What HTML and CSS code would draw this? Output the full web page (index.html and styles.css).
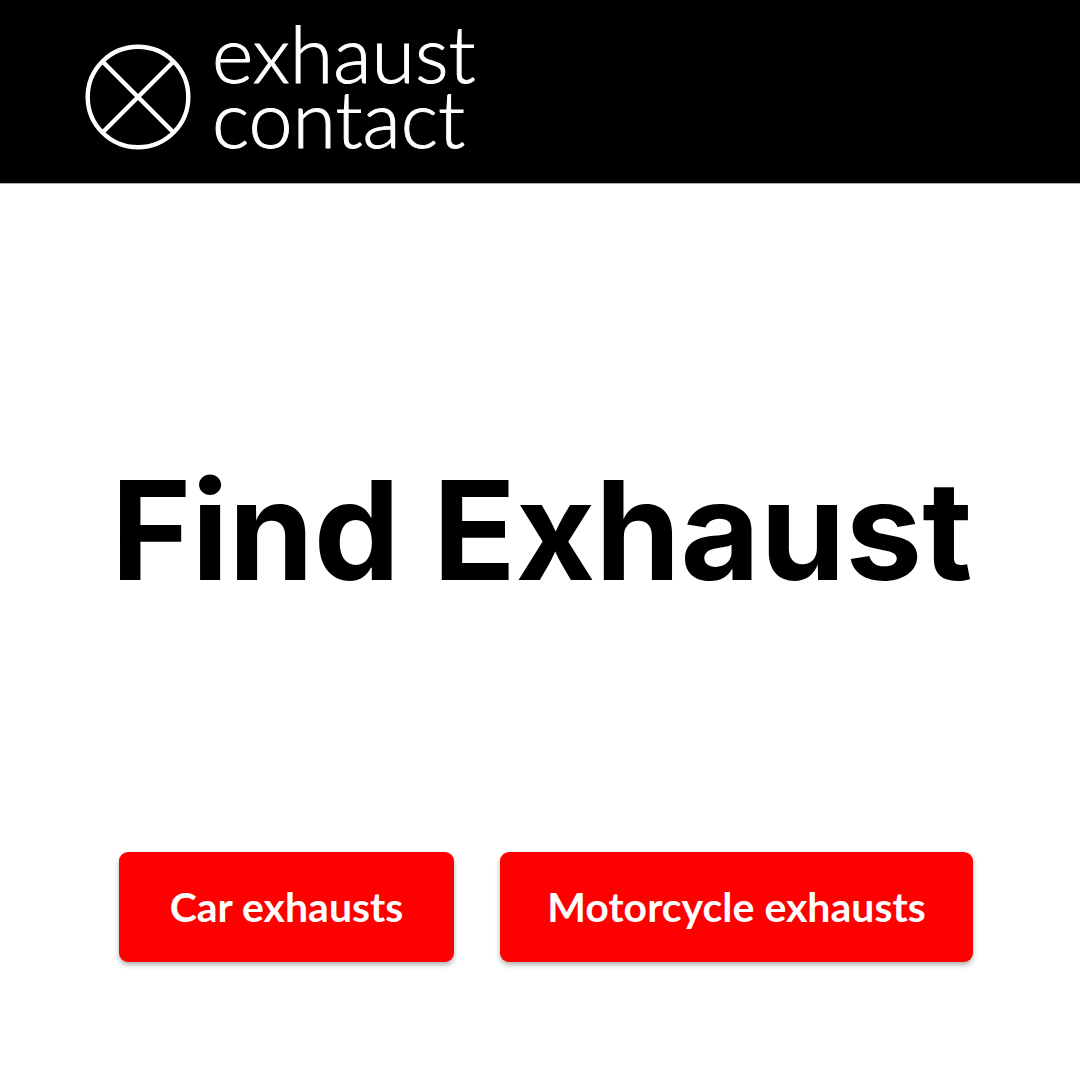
FILE: index.html
```html
<!DOCTYPE html>
<html lang="en">
<head>
<meta charset="utf-8">
<meta name="viewport" content="width=device-width, initial-scale=1">
<title>Exhaust Contact</title>
<link rel="stylesheet" href="styles.css">
</head>
<body>
<header class="site-header">
  <a class="brand" href="#">
    <svg class="brand-mark" viewBox="0 0 106 106" aria-hidden="true">
      <g fill="none" stroke="currentColor" stroke-width="4.4">
        <circle cx="53" cy="53" r="50.3"/>
        <path d="M17.5 17.5 88.5 88.5M88.5 17.5 17.5 88.5"/>
      </g>
    </svg>
    <span class="brand-name">exhaust<br>contact</span>
  </a>
</header>
<main class="hero">
  <h1 class="title">Find Exhaust</h1>
  <div class="actions">
    <button class="button" type="button">Car exhausts</button>
    <button class="button" type="button">Motorcycle exhausts</button>
  </div>
</main>
</body>
</html>
```
FILE: styles.css
```css
* {
  box-sizing: border-box;
}

body {
  margin: 0;
  background: #fff;
  color: #000;
  font-family: Lato, sans-serif;
}

.site-header {
  padding: 20px 85px 33px;
  background: #000;
  border-bottom: 1px solid #aaa;
}

.brand {
  display: flex;
  align-items: flex-end;
  gap: 21px;
  color: #fff;
  text-decoration: none;
}

.brand-mark {
  flex: none;
  width: 106px;
  height: 106px;
}

.brand-name {
  font-size: 79px;
  font-weight: 300;
  line-height: 65px;
  -webkit-text-stroke: 1px currentColor;
}

.hero {
  padding: 250px 107px 112px 119px;
}

.title {
  margin: 0 -8px;
  font-family: Inter, sans-serif;
  font-size: 137px;
  font-weight: 700;
  line-height: 192px;
  white-space: nowrap;
}

.actions {
  display: grid;
  grid-template-columns: 335fr 473fr;
  gap: 46px;
  margin-top: 226px;
}

.button {
  height: 110px;
  padding: 0 0 2px;
  border: 0;
  border-radius: 9px;
  background: #f00;
  box-shadow: 0 3px 5px rgb(0 0 0 / 30%);
  color: #fff;
  font-family: Lato, sans-serif;
  font-size: 41px;
  font-weight: 700;
}
```
